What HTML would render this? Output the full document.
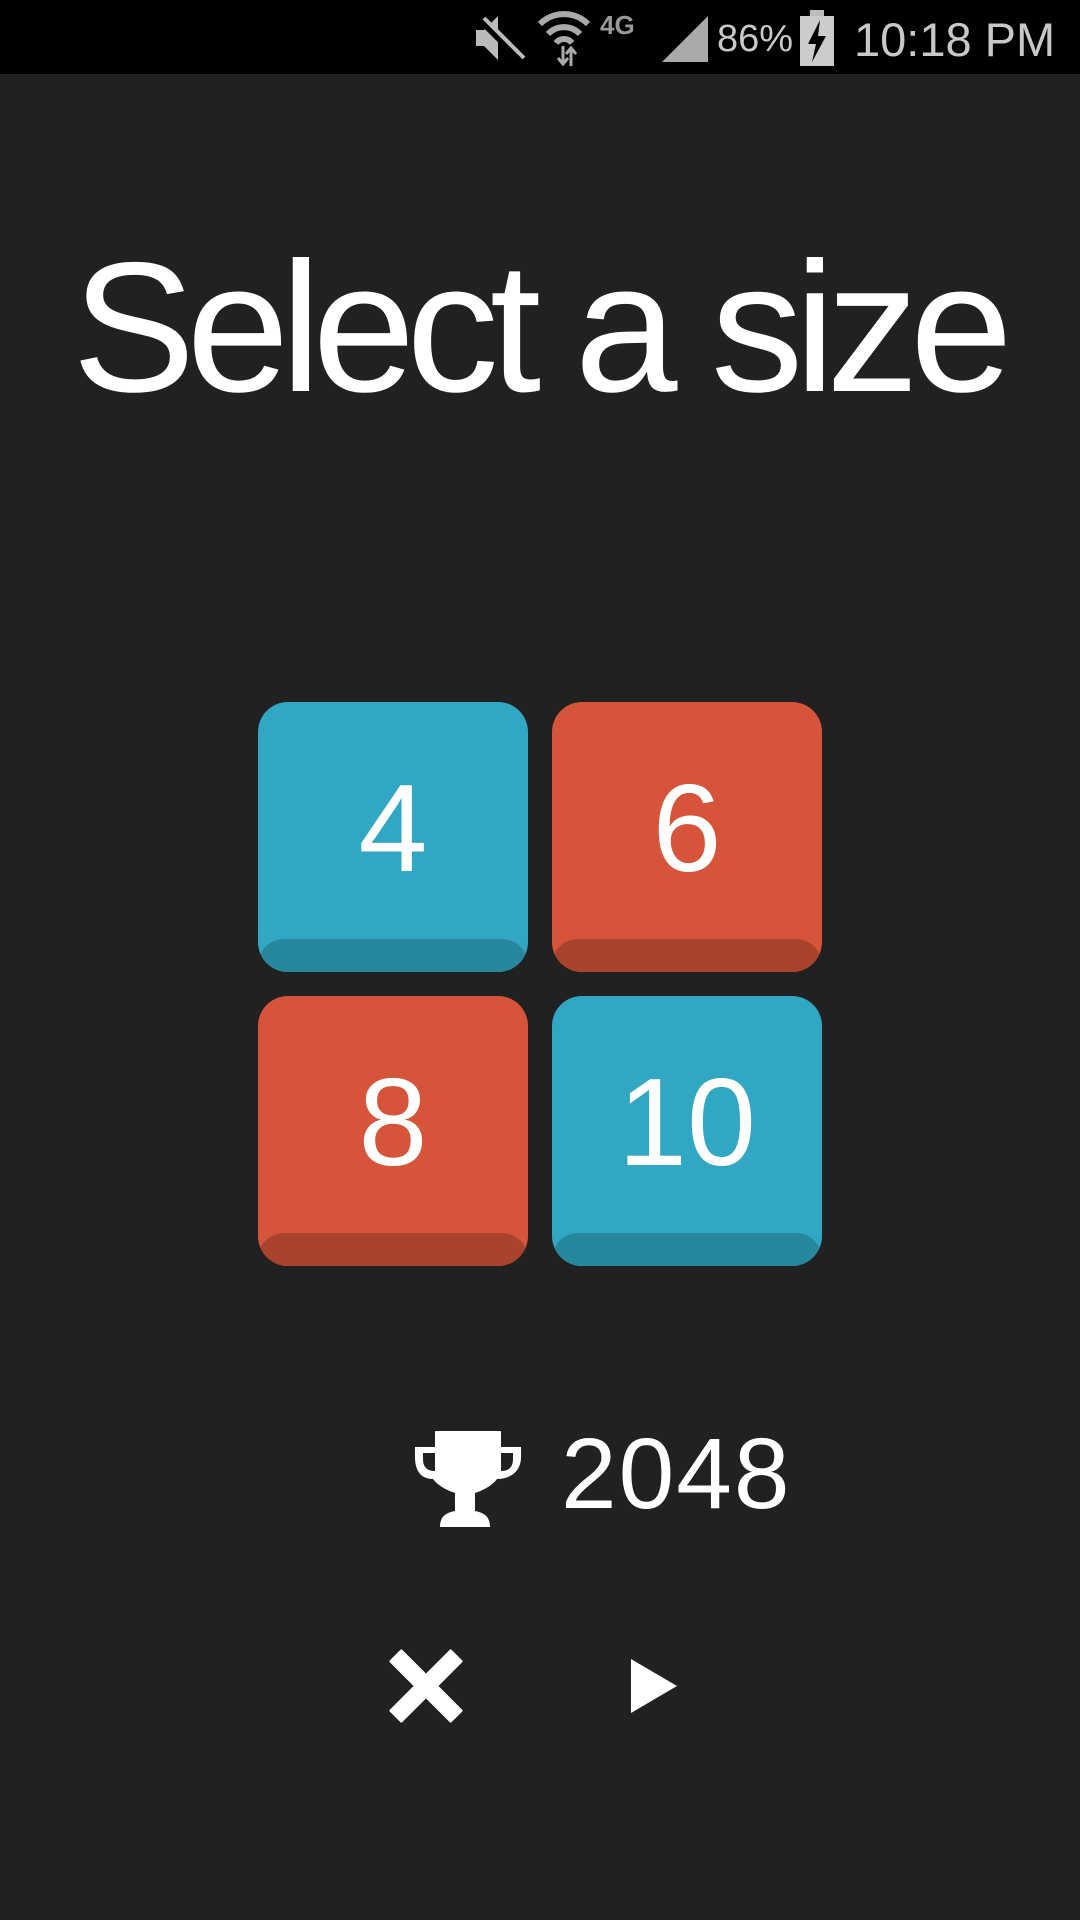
<!DOCTYPE html>
<html><head><meta charset="utf-8"><style>
html,body{margin:0;padding:0}
body{width:1080px;height:1920px;background:#212121;position:relative;overflow:hidden;font-family:"Liberation Sans",sans-serif;color:#fff}
.sb{position:absolute;left:0;top:0;width:1080px;height:74px;background:#000}
.sbt{position:absolute;top:8px;color:#c8c8c8;font-size:48px}
.title{position:absolute;left:72px;top:218px;width:940px;font-size:185px;letter-spacing:-9px;white-space:nowrap;line-height:220px}
.tile{position:absolute;width:270px;height:270px;border-radius:30px;overflow:hidden}
.tile .band{position:absolute;left:0;right:0;bottom:0;height:33px;border-radius:26px 26px 0 0}
.tile span{position:absolute;left:0;right:0;top:62px;text-align:center;font-size:124px;line-height:130px}
.b{background:#31a7c3}.b .band{background:#27879c}
.r{background:#d65439}.r .band{background:#aa432d}
.score{position:absolute;left:561px;top:1424px;font-size:100px;line-height:100px;letter-spacing:2px}
</style></head><body>
<div class="sb">
<svg style="position:absolute;left:470px;top:12px" width="60" height="52" viewBox="0 0 60 52"><polygon points="6,18 14,18 28,4 28,48 14,34 6,34" fill="#bbb"/><line x1="8" y1="6" x2="50" y2="48" stroke="#000" stroke-width="6"/><line x1="14" y1="6" x2="54" y2="46" stroke="#bbb" stroke-width="4"/></svg>
<svg style="position:absolute;left:538px;top:10px" width="60" height="56" viewBox="0 0 60 56"><path d="M2 14 A34 34 0 0 1 50 14" stroke="#aaa" stroke-width="6" fill="none"/><path d="M10 24 A22 22 0 0 1 42 24" stroke="#aaa" stroke-width="6" fill="none"/><path d="M18 33 A10 10 0 0 1 34 33" stroke="#aaa" stroke-width="6" fill="none"/><path d="M25 36 V54 M20 48 L25 54 L30 48" stroke="#aaa" stroke-width="3" fill="none"/><path d="M33 56 V38 M28 44 L33 38 L38 44" stroke="#aaa" stroke-width="3" fill="none"/></svg>
<div style="position:absolute;left:600px;top:10px;color:#999;font-size:26px;font-weight:bold">4G</div>
<svg style="position:absolute;left:660px;top:14px" width="50" height="50" viewBox="0 0 50 50"><polygon points="2,48 48,2 48,48" fill="#aaa"/></svg>
<div class="sbt" style="left:717px;font-size:38px;top:18px">86%</div>
<svg style="position:absolute;left:798px;top:10px" width="38" height="56" viewBox="0 0 38 56"><rect x="12" y="0" width="14" height="6" fill="#bbb"/><rect x="2" y="6" width="34" height="50" fill="#ccc"/><polygon points="22,10 10,34 18,34 14,52 28,26 20,26" fill="#000"/></svg>
<div class="sbt" style="left:854px;top:12px;font-size:47px">10:18 PM</div>
</div>
<div class="title">Select a size</div>
<div class="tile b" style="left:258px;top:702px"><div class="band"></div><span>4</span></div>
<div class="tile r" style="left:552px;top:702px"><div class="band"></div><span>6</span></div>
<div class="tile r" style="left:258px;top:996px"><div class="band"></div><span>8</span></div>
<div class="tile b" style="left:552px;top:996px"><div class="band"></div><span>10</span></div>
<svg style="position:absolute;left:413px;top:1431px" width="110" height="96" viewBox="0 0 110 96"><path d="M22 0 H88 V16 H108 V26 C108 40 98 48 84 48 C78 56 68 60 62 62 V80 C72 82 77 86 77 96 H27 C27 86 32 82 42 80 V62 C36 60 26 56 20 48 C8 48 2 40 2 26 V16 H22 Z M10 22 V28 C10 36 14 40 22 40 V22 Z M100 22 H88 V40 C96 40 100 36 100 28 Z" fill="#fff" fill-rule="evenodd"/></svg>
<div class="score">2048</div>
<svg style="position:absolute;left:389px;top:1649px" width="74" height="74" viewBox="0 0 72 72"><path d="M12 2 L36 26 L60 2 L70 12 L46 36 L70 60 L60 70 L36 46 L12 70 L2 60 L26 36 L2 12 Z" fill="#fff" stroke="#fff" stroke-width="3" stroke-linejoin="round"/></svg>
<svg style="position:absolute;left:631px;top:1659px" width="46" height="54" viewBox="0 0 46 54"><polygon points="0,0 46,27 0,54" fill="#fff"/></svg>
</body></html>
